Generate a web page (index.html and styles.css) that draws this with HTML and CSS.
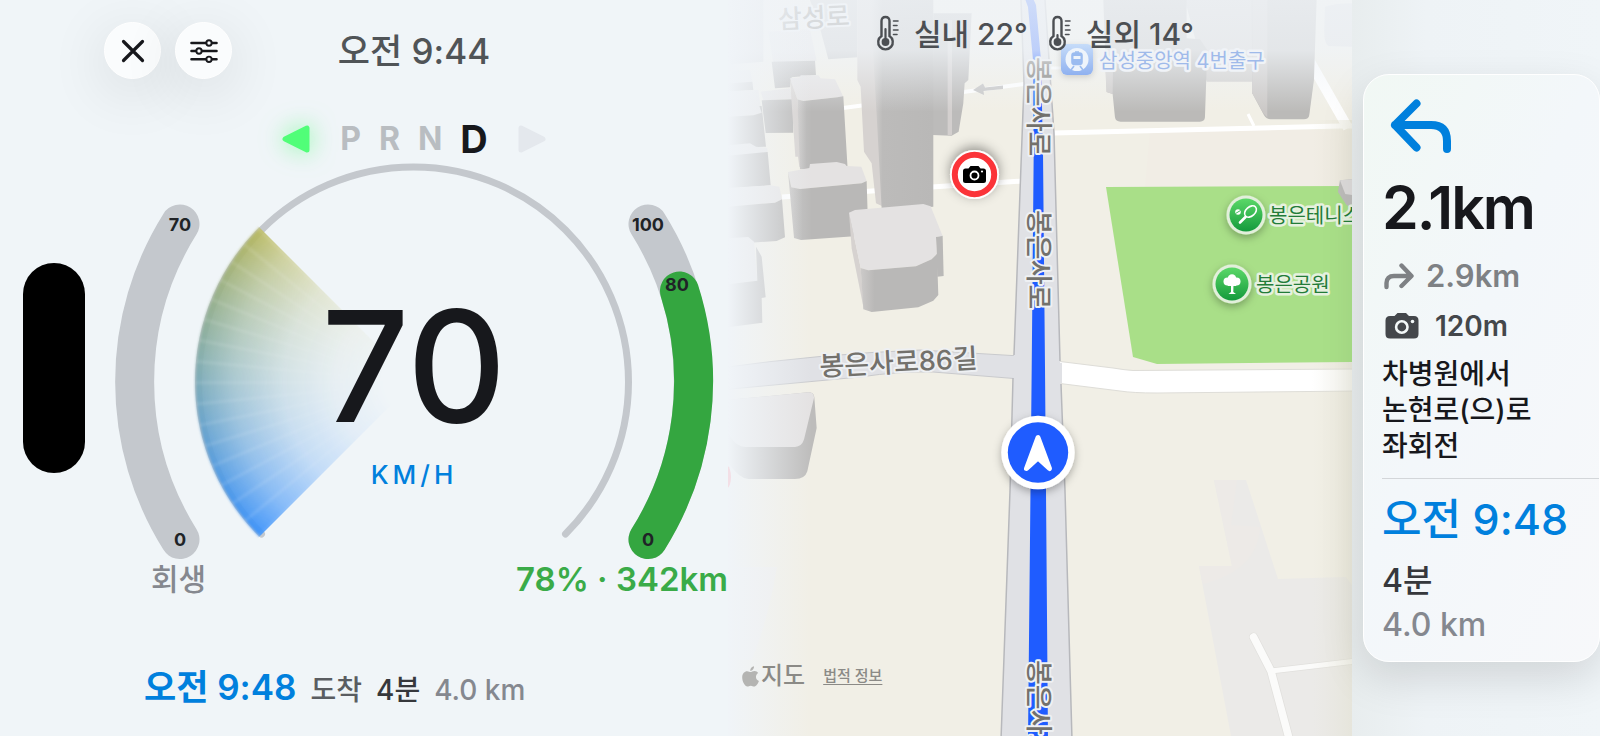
FILE: index.html
```html
<!DOCTYPE html>
<html lang="ko">
<head>
<meta charset="utf-8">
<meta name="viewport" content="width=device-width, initial-scale=1">
<title>주행 계기판</title>
<link rel="stylesheet" href="styles.css">
</head>
<body>
<div class="dash">
  <section class="cluster" aria-label="계기판">
    <div class="sensor"></div>
    <div class="cluster-main">
      <header class="top">
        <div class="top-buttons">
          <button class="round" type="button" aria-label="닫기">
            <svg width="28" height="28" viewBox="0 0 28 28"><path d="M4.500 4.500 23.500 23.500M23.500 4.500 4.500 23.500" fill="none" stroke="#17181c" stroke-width="3.200" stroke-linecap="round"/></svg>
          </button>
          <button class="round" type="button" aria-label="설정">
            <svg width="28" height="28" viewBox="0 0 28 28" fill="none" stroke="#17181c" stroke-width="2.600" stroke-linecap="round"><path d="M1.500 6H16M22 6h4.500M1.500 14H6M12 14h14.500M1.500 22.300H16M22 22.300h4.500"/><circle cx="19" cy="6" r="2.700" stroke-width="1.900"/><circle cx="9" cy="14" r="2.700" stroke-width="1.900"/><circle cx="19" cy="22.300" r="2.700" stroke-width="1.900"/></svg>
          </button>
        </div>
        <time class="clock">오전 9:44</time>
      </header>

      <div class="gears">
        <svg class="turn turn-on" width="28" height="28" viewBox="0 0 28 28"><path d="M3 14 25 3V25Z" fill="#51fe78" stroke="#51fe78" stroke-width="5" stroke-linejoin="round"/></svg>
        <div class="gear-list"><span>P</span><span>R</span><span>N</span><span class="gear-on">D</span></div>
        <svg class="turn" width="28" height="28" viewBox="0 0 28 28"><path d="M25 14 3 3V25Z" fill="#e4e8ed" stroke="#e4e8ed" stroke-width="5" stroke-linejoin="round"/></svg>
      </div>

      <div class="gauge">
        <svg class="gauge-art" viewBox="100 158 628 400">
          <path d="M180 223A297 297 0 0 0 180 538.500" fill="none" stroke="#c4c8cd" stroke-width="39" stroke-linecap="round"/>
          <path d="M648 223A297 297 0 0 1 648 538.500" fill="none" stroke="#c4c8cd" stroke-width="39" stroke-linecap="round"/>
          <path d="M679.500 290A297 297 0 0 1 648 538.500" fill="none" stroke="#34a640" stroke-width="39" stroke-linecap="round"/>
          <path d="M261.500 533A215 215 0 1 1 565.500 533" fill="none" stroke="#c4c8cd" stroke-width="7" stroke-linecap="round"/>
          <foreignObject x="193" y="160" width="442" height="442"><div class="fan"><div class="fan-rays"></div></div></foreignObject>
          <g class="tick" text-anchor="middle">
            <text x="180" y="230">70</text><text x="180" y="545">0</text>
            <text x="648" y="230">100</text><text x="677" y="290">80</text><text x="648" y="545">0</text>
          </g>
        </svg>
        <div class="readout">
          <span class="speed">70</span>
          <span class="unit">KM/H</span>
        </div>
      </div>

      <div class="levels"><span class="regen">회생</span><span class="range">78% · 342km</span></div>

      <footer class="trip">
        <span class="trip-eta">오전 9:48</span><span class="trip-word">도착</span><span class="trip-min">4분</span><span class="trip-dist">4.0 km</span>
      </footer>
    </div>
  </section>

  <section class="map" aria-label="지도">
    <svg class="map-art" viewBox="728 0 624 736" preserveAspectRatio="xMidYMid slice">
      <defs>
        <linearGradient id="fadeLeft"><stop offset="0" stop-color="#f0f4f8"/><stop offset=".3" stop-color="#f0f4f8" stop-opacity=".7"/><stop offset="1" stop-color="#f0f4f8" stop-opacity="0"/></linearGradient>
        <linearGradient id="fadeTop" x2="0" y2="1"><stop offset="0" stop-color="#f0f4f8" stop-opacity=".84"/><stop offset=".45" stop-color="#f0f4f8" stop-opacity=".76"/><stop offset="1" stop-color="#f0f4f8" stop-opacity="0"/></linearGradient>
        <linearGradient id="fadeRight"><stop offset="0" stop-color="#e6e4d6" stop-opacity="0"/><stop offset="1" stop-color="#e0dfcc" stop-opacity=".45"/></linearGradient>
        <linearGradient id="tower"><stop offset="0" stop-color="#d8d5d3"/><stop offset=".2" stop-color="#bcbbba"/><stop offset="1" stop-color="#b9b8b7"/></linearGradient>
        <linearGradient id="wall"><stop offset="0" stop-color="#cccac9"/><stop offset=".18" stop-color="#b9b8b7"/><stop offset="1" stop-color="#b9b8b7"/></linearGradient>
        <linearGradient id="poi" x2="0" y2="1"><stop offset="0" stop-color="#5bd868"/><stop offset="1" stop-color="#149a3c"/></linearGradient>
        <linearGradient id="metro" x2="0" y2="1"><stop offset="0" stop-color="#c6dcf9"/><stop offset="1" stop-color="#8fb1f0"/></linearGradient>
        <filter id="soft" x="-40%" y="-40%" width="180%" height="180%"><feDropShadow dx="0" dy="3" stdDeviation="4" flood-color="#000" flood-opacity=".3"/></filter>
        <filter id="faint" x="-40%" y="-40%" width="180%" height="180%"><feDropShadow dx="0" dy="2" stdDeviation="3" flood-color="#000" flood-opacity=".15"/></filter>
        <filter id="deep" x="-40%" y="-40%" width="180%" height="180%"><feDropShadow dx="0" dy="-3" stdDeviation="6" flood-color="#000" flood-opacity=".4"/></filter>
      </defs>
      <rect x="500" y="-300" width="1100" height="1400" fill="#f1efe6"/>
      <path d="M1150 130H1352V360H1130Z" fill="#f1ede5"/>

      <path d="M1214 480H1246L1278 579 1346 577 1352 585V736H1231L1199 566H1232Z" fill="#ebeae8"/>
      <path d="M1214 480H1237L1231 525 1260 527Q1258 570 1203 584L1199 566H1232Z" fill="#edeae7"/>
      <path d="M735 567H777Q768 620 752 660H738Z" fill="#efeeec"/>
      <g fill="none" stroke="#e1e0dd" stroke-linecap="round"><path d="M1253.500 637 1271 671 1290 742" stroke-width="9"/><path d="M1271 671 1356 661" stroke-width="6.500"/></g>
      <g fill="none" stroke="#fbfbfa" stroke-linecap="round"><path d="M1253.500 637 1271 671 1290 742" stroke-width="7.500"/><path d="M1271 671 1356 661" stroke-width="5"/></g>

      <g fill="none" stroke="#fff">
        <path d="M782 197 1022 181" stroke-width="5"/><path d="M843 108 1024 84" stroke-width="4"/>
        <path d="M1054 133 1340 126H1360" stroke-width="5"/><path d="M1308 58 1348 128" stroke-width="10"/>
        <path d="M1248 114 1254 126" stroke-width="3"/><path d="M1051 68 1080 68" stroke-width="3"/>
      </g>
      <path d="M1003 85.500 985 87.500 983 83.500 973 90 984 95 983.500 91 1003 89Z" fill="#c5c5c5"/>
      <path d="M720 368Q820 354 920 350L1020 356V379L933 372Q900 371 860 377L720 390Z" fill="#e0e1e5" stroke="#c9cacd"/>
      <path d="M1056 361 1113 368Q1125 370 1133 370.500L1360 369V391L1157 393Q1133 393 1120 391L1056 383Z" fill="#fff" stroke="#deddd8"/>
      <path d="M1021 0 1024 84 1014 355 1010 491 1001 740H1072L1065 491 1060 360 1054 133 1045 0Z" fill="#e0e1e5"/>
      <path d="M1021 0 1024 84 1014 355M1013 378 1010 491 1001 740M1072 740 1065 491 1061 384M1060 361 1054 133 1045 0" fill="none" stroke="#b7b8bc" stroke-width="1.500"/>
      <path d="M1013 356V377M1060.500 363V383" stroke="#e0e1e5" stroke-width="3"/>
      <path d="M1024 -4 1028 7 1033 60 1033.700 153 1031.700 368 1028 740H1048L1045 368 1043 153 1041 60 1036 5 1032 -4Z" fill="#1f5cff"/>
      <rect x="1312" y="120" width="40" height="616" fill="url(#fadeRight)"/>
      <path d="M1106 187 1352 186V362L1157 364 1133 357Z" fill="#a9df88"/>

      <g transform="translate(720 0) scale(.3333)" stroke-linejoin="round">
        <path d="M145 95 270 88 290 182 160 188Z" fill="#e4e2e2"/><path d="M155 185 285 182 288 225 215 232 210 262 165 265Z" fill="#b9b8b7"/>
        <path d="M0 0H130V185L0 195Z" fill="#cfcfcf"/><path d="M270 0H412V172L325 178 300 85Z" fill="#c6c6c6"/>
        <path d="M0 215 90 210 97 245 0 255Z" fill="#e6e5e5"/><path d="M0 252 97 245 100 270 0 276Z" fill="#bab9b8"/>
        <path d="M122 275 210 265 218 298 130 301Z" fill="#e4e2e2"/><path d="M125 301 218 298 220 398 137 399Z" fill="#b9b8b7"/>
        <path d="M0 276 115 270 125 340 100 346 0 352Z" fill="#e6e5e5"/><path d="M0 352 100 346 125 338 118 318 125 318 138 440 0 446Z" fill="#b9b8b7"/>
        <path d="M0 438 90 430 108 440 142 444 143 458 0 470Z" fill="#e6e5e5"/><path d="M0 470 143 456 152 556 0 566Z" fill="#b9b8b7"/>
        <path d="M0 567 150 556 178 560 186 598 165 608 0 622Z" fill="#e6e5e5"/><path d="M0 622 165 608 186 598 195 712 170 723 0 735Z" fill="#b9b8b7"/>
        <path d="M0 716 85 711 102 725 112 842 0 856Z" fill="#e6e5e5"/><path d="M0 856 112 842 108 740 125 770 137 892 125 894 127 968 0 985Z" fill="#b9b8b7"/>
        <path d="M640 40 755 40 752 100 745 240 734 250 730 310 716 395 695 407 638 405Z" fill="#bcbbba"/><path d="M683 60H696V405H683Z" fill="#d3cfce"/>
        <path d="M412 0H470L500 625 468 610 455 490 432 455 422 260 412 240Z" fill="#d6d2d0"/>
        <path d="M450 0H640V620L485 628 470 345Z" fill="url(#tower)"/>
        <path d="M210 235 240 232 242 226 295 226 302 235 345 238 370 290 352 292 250 303 232 298Z" fill="#e4e2e2"/>
        <path d="M210 235 232 298 245 505 238 500 234 470 226 470Z" fill="#d6d2d0"/><path d="M232 298 250 303 352 292 370 289 383 508 240 508Z" fill="url(#wall)"/>
        <path d="M204 516 268 504 270 492 350 486 375 492 380 498 424 500 440 543 425 550 240 567 214 562Z" fill="#e4e2e2"/>
        <path d="M204 516 214 562 240 567 425 550 440 543 445 706 243 720 222 714Z" fill="url(#wall)"/>
        <path d="M648 710 668 707 671 828 652 830Z" fill="#b9b8b7"/>
        <path d="M387 636 422 803 432 930 395 745Z" fill="#d6d2d0"/>
        <path d="M387 638 405 630 610 612 632 619 668 708 648 710 650 762 635 778 588 799 445 811 422 804Z" fill="#e4e2e2"/>
        <path d="M422 804 445 811 588 799 635 778 651 762 655 885 640 902 595 922 455 936 430 928Z" fill="url(#wall)"/>
        <g transform="translate(0 1104)"><path d="M0 98 265 73Q282 73 283 88L290 180 262 310Q255 333 225 333H85Q60 333 30 292L0 260Z" fill="#bdbcbb"/><path d="M0 98 265 73Q283 73 282 90L252 215Q245 237 225 237H75Q50 237 30 205L0 180Z" fill="#e4e2e2"/></g>
        <g transform="translate(840 0)">
          <path d="M555 0H760V245H620Z" fill="#cfcdcb"/>
          <path d="M310 0H560V115L600 118 622 150 615 352Q614 365 600 365H362Q347 365 345 352L338 282 320 276Z" fill="#bbbab8"/>
          <path d="M338 282 320 276 312 150 340 150Z" fill="#cecbc9"/>
          <path d="M755 0H950L942 240 928 345Q926 358 912 358H812Q800 358 792 345L757 280Z" fill="#bbbab8"/><path d="M790 340 757 280V0H802V352Z" fill="#cbc8c6"/>
          <path d="M975 20Q1010 10 1057 10V140L985 138Q972 130 973 90Z" fill="#dcdcdc"/>
          <path d="M1020 541 1057 538V622L1040 616 1014 576Z" fill="#bdbcba"/><path d="M1020 541 1057 538V585L1036 582Z" fill="#dddbda"/>
        </g>
      </g>

      <g class="road">
        <text x="778" y="27" font-size="26" transform="rotate(-3 814 20)">삼성로</text>
        <text transform="translate(1029 57) rotate(90)">봉은사로</text>
        <text transform="translate(1029 210) rotate(90)">봉은사로</text>
        <text transform="translate(1029 660) rotate(90)">봉은사로</text>
        <text transform="translate(820 376) rotate(-3)">봉은사로86길</text>
      </g>
      <rect x="728" width="624" height="112" fill="url(#fadeTop)"/>

      <g filter="url(#faint)"><rect x="1061" y="44" width="32" height="31" rx="6" fill="url(#metro)"/></g>
      <circle cx="1077" cy="59.500" r="11.500" fill="#eef4fb"/>
      <g fill="none" stroke="#9bbcf0" stroke-width="1.600"><rect x="1072" y="53" width="10" height="11.500" rx="2.500" fill="#9bbcf0"/><path d="M1074 66 1071 70M1080 66 1083 70M1075 52H1079"/><path d="M1073.500 57.500H1080.500" stroke="#eef4fb" stroke-width="3"/></g>
      <text class="place place-metro" x="1099" y="68">삼성중앙역 4번출구</text>

      <g filter="url(#soft)"><circle cx="1246" cy="215" r="19.500" fill="#e2efdb"/><circle cx="1232" cy="284" r="19.500" fill="#e2efdb"/></g>
      <circle cx="1246" cy="215" r="16.500" fill="url(#poi)"/><circle cx="1232" cy="284" r="16.500" fill="url(#poi)"/>
      <g stroke="#fff" fill="none"><ellipse cx="1250.500" cy="211.500" rx="6.800" ry="4.600" transform="rotate(-42 1250.500 211.500)" stroke-width="1.600"/><path d="M1245.500 217 1240 222.500" stroke-width="2.600" stroke-linecap="round"/></g>
      <circle cx="1238" cy="212" r="2.800" fill="#fff"/><path d="M1235.500 213.500 1240.500 210.500" stroke="#29b14a" stroke-width=".9"/>
      <g fill="#fff"><circle cx="1232" cy="278.500" r="4.200"/><circle cx="1227.500" cy="281.500" r="4"/><circle cx="1236.500" cy="281.500" r="4"/><path d="M1226 282H1238L1236 286H1228ZM1231 284H1233.500L1233.300 292 1236 294H1228.500L1231 292Z"/></g>
      <text class="place" x="1269" y="223">봉은테니스</text>
      <text class="place" x="1256" y="292">봉은공원</text>

      <circle cx="974.500" cy="174.500" r="24.500" fill="#fff" filter="url(#deep)"/>
      <circle cx="974.500" cy="174.500" r="19.700" fill="#fff" stroke="#fb3439" stroke-width="6"/>
      <path d="M965.500 168.500H968.500L970.500 166H978.500L980.500 168.500H983.500Q986 168.500 986 171V180.500Q986 183 983.500 183H965.500Q963 183 963 180.500V171Q963 168.500 965.500 168.500Z"/>
      <circle cx="974.500" cy="175.500" r="4" stroke="#fff" stroke-width="1.800"/><circle cx="982" cy="171.500" r="1.100" fill="#fff"/>

      <circle cx="1038" cy="452.500" r="36.700" fill="#fff" filter="url(#soft)"/><circle cx="1038" cy="452.500" r="30.200" fill="#1f5cff"/>
      <path d="M1038 437.500 1026.500 468.500 1038 458 1049.500 468.500Z" fill="#fff" stroke="#fff" stroke-width="5" stroke-linejoin="round"/>
      <rect x="728" y="0" width="84" height="736" fill="url(#fadeLeft)"/>
      <ellipse cx="727" cy="477" rx="4" ry="11" fill="#f3dfe6"/>
    </svg>
    <div class="map-overlay">
      <div class="weather">
        <span class="temp"><svg width="24" height="38" viewBox="0 0 24 38" fill="none" stroke="#4c4f53" stroke-linecap="round"><path d="M5.500 21V6Q5.500 2 9.500 2T13.500 6V21A7.300 7.300 0 1 1 5.500 21Z" stroke-width="2.400"/><path d="M9.500 14V27" stroke-width="2.200"/><circle cx="9.500" cy="27" r="3.900" fill="#4c4f53" stroke="none"/><path d="M17.500 6H22M17.500 10.500H21M17.500 15H22M17.500 19.500H21" stroke-width="1.600"/></svg>실내 22°</span>
        <span class="temp"><svg width="24" height="38" viewBox="0 0 24 38" fill="none" stroke="#4c4f53" stroke-linecap="round"><path d="M5.500 21V6Q5.500 2 9.500 2T13.500 6V21A7.300 7.300 0 1 1 5.500 21Z" stroke-width="2.400"/><path d="M9.500 20V27" stroke-width="2.200"/><circle cx="9.500" cy="27" r="3.900" fill="#4c4f53" stroke="none"/><path d="M17.500 6H22M17.500 10.500H21M17.500 15H22M17.500 19.500H21" stroke-width="1.600"/></svg>실외 14°</span>
      </div>
      <div class="credit">
        <span class="brand"><svg width="17" height="21" viewBox="0 0 17 21" fill="#b4b4b2"><path d="M12 .300C12.200 2.800 10.400 4.900 8.300 4.900 8 2.700 10 .500 12 .300ZM8.600 6.100C9.300 6.100 10.700 5 12.500 5 14.200 5 15.500 5.900 16.200 6.900 12.900 8.900 13.400 13.500 16.900 14.900 16 17.500 14.100 20.500 12.100 20.500 10.800 20.500 10.400 19.700 8.800 19.700 7.100 19.700 6.600 20.500 5.400 20.500 3 20.500 .200 15.800 .200 11.500.200 7.300 2.700 5.200 5.100 5.200 6.600 5.200 7.900 6.100 8.600 6.100Z"/></svg>지도</span>
        <a class="legal" href="#legal">법적 정보</a>
      </div>
    </div>
  </section>

  <aside class="side" aria-label="경로 안내">
    <div class="card">
      <svg class="turn-left" width="64" height="56" viewBox="0 0 64 56" fill="none" stroke="#0080dd" stroke-width="8" stroke-linecap="round" stroke-linejoin="round"><path d="M28.500 5.500 7 27 28.500 49.500M7 27H43Q59 27 59 43V51"/></svg>
      <strong class="next">2.1km</strong>
      <div class="row row-then"><svg width="32" height="28" viewBox="0 0 32 28" fill="none" stroke="#7e8184" stroke-width="4.400" stroke-linecap="round" stroke-linejoin="round"><path d="M19.500 3.500 29.500 14 19.500 24M29 14H12Q4.500 14 4.500 21V25"/></svg>2.9km</div>
      <div class="row row-cam"><svg width="34" height="28" viewBox="0 0 34 28"><path d="M5 4H9.500L12.500 1H21L24 4H29Q33.500 4 33.500 8.500V22Q33.500 26.500 29 26.500H5Q.500 26.500.500 22V8.500Q.500 4 5 4Z" fill="#44474b"/><circle cx="16.800" cy="15" r="5.700" fill="none" stroke="#f3f8f8" stroke-width="2.600"/><circle cx="27.500" cy="9.500" r="1.800" fill="#f3f8f8"/></svg>120m</div>
      <p class="guide">차병원에서<br>논현로(으)로<br>좌회전</p>
      <div class="arrive">
        <span class="arrive-time">오전 9:48</span>
        <span class="arrive-min">4분</span>
        <span class="arrive-dist">4.0 km</span>
      </div>
    </div>
  </aside>
</div>
</body>
</html>
```

FILE: styles.css
```css
* { box-sizing: border-box; }
body {
  margin: 0;
  background: #f0f5f8;
  color: #17181c;
  font-family: Inter, "Noto Sans CJK KR", sans-serif;
  font-weight: 500;
}
.dash {
  display: grid;
  grid-template-columns: 728fr 624fr 248fr;
  min-height: 100vh;
  overflow: hidden;
}

/* Instrument cluster */
.cluster { display: flex; align-items: stretch; z-index: 1; min-width: 0; }
.sensor {
  flex: none;
  align-self: center;
  width: 62px;
  height: 210px;
  margin: 0 15px 0 23px;
  border-radius: 31px;
  background: #000;
}
.cluster-main { flex: 1; min-width: 0; display: flex; flex-direction: column; padding: 22px 0 22px; }
.top { display: grid; grid-template-columns: 1fr auto 1fr; align-items: center; }
.top-buttons { display: flex; gap: 14px; padding-left: 4px; }
.round {
  display: grid;
  place-items: center;
  width: 57px;
  height: 57px;
  padding: 0;
  border: 1px solid #fff;
  border-radius: 50%;
  background: #fafcfd;
  box-shadow: 0 12px 60px rgba(0, 0, 0, .12);
}
.clock { color: #505457; font-size: 35px; line-height: 48px; }
.gears { display: flex; justify-content: center; align-items: center; gap: 30px; height: 40px; margin-top: 40px; }
.turn { overflow: visible; }
.turn-on { filter: drop-shadow(0 0 12px rgba(81, 254, 120, .7)); }
.gear-list { display: flex; align-items: center; gap: 18px; color: #b9bdc1; font-size: 32px; font-weight: 700; line-height: 40px; }
.gear-on { color: #17181c; font-size: 38px; }
.gauge { display: grid; }
.gauge > * { grid-area: 1 / 1; }
.gauge-art { display: block; width: 100%; height: auto; }
.fan {
  width: 442px;
  height: 442px;
  clip-path: polygon(-3% -3%, 50% 50%, -3% 103%);
  filter: blur(1px);
}
.fan-rays {
  width: 442px;
  height: 442px;
  border-radius: 50%;
  background:
    repeating-conic-gradient(from 225deg, rgba(255, 255, 255, .12) 0deg, transparent .8deg 4.8deg, rgba(255, 255, 255, .12) 5.6deg),
    conic-gradient(from 225deg, #3f94fa 0deg, #4f9ae8 16deg, #6ea6c8 36deg, #84aeb0 50deg, #98b18c 68deg, #b2b768 86deg, #bcbc66 90deg, transparent 93deg, transparent 357deg, #3f94fa 358deg);
  -webkit-mask-image: radial-gradient(circle, transparent 30px, rgba(0, 0, 0, .08) 80px, rgba(0, 0, 0, .26) 130px, rgba(0, 0, 0, .6) 180px, rgba(0, 0, 0, .9) 210px, #000 217px, transparent 220px);
  mask-image: radial-gradient(circle, transparent 30px, rgba(0, 0, 0, .08) 80px, rgba(0, 0, 0, .26) 130px, rgba(0, 0, 0, .6) 180px, rgba(0, 0, 0, .9) 210px, #000 217px, transparent 220px);
}
.tick { fill: #202327; font-size: 18px; font-weight: 700; }
.readout { display: flex; flex-direction: column; align-items: center; padding-top: 130px; }
.speed { font-size: 154px; line-height: 154px; font-weight: 500; }
.unit { margin-top: 16px; color: #0080dd; font-size: 26px; line-height: 32px; letter-spacing: 4px; }
.levels { display: flex; justify-content: space-between; align-items: center; height: 40px; padding-left: 51px; line-height: 40px; }
.regen { color: #85888f; font-size: 30px; }
.range { color: #3aab48; font-size: 33px; font-weight: 600; white-space: nowrap; }
.trip { display: flex; align-items: baseline; gap: 14px; margin-top: auto; padding-left: 44px; line-height: 48px; font-size: 28px; white-space: nowrap; }
.trip-eta { color: #0080dd; font-size: 35px; font-weight: 600; }
.trip-word { color: #5a5d61; }
.trip-min { color: #36383c; }
.trip-dist { color: #85888f; }

/* Map */
.map { display: grid; min-width: 0; overflow: hidden; }
.map > * { grid-area: 1 / 1; }
.map-art { display: block; width: 100%; height: 100%; min-height: 736px; }
.road { fill: #73716c; stroke: #eef0f3; stroke-width: 4px; stroke-linejoin: round; paint-order: stroke; font-size: 27px; font-weight: 500; }
.place { fill: #237c38; stroke: #e6f1df; stroke-width: 5px; stroke-linejoin: round; paint-order: stroke; font-size: 20px; font-weight: 400; }
.place-metro { fill: #9fbaea; stroke: #f0f3f7; }
.map-overlay { z-index: 1; display: flex; flex-direction: column; justify-content: space-between; padding: 14px 14px 40px; }
.weather { display: flex; justify-content: center; gap: 20px; padding-right: 10px; color: #4c4f53; font-size: 30px; line-height: 40px; white-space: nowrap; }
.temp { display: flex; align-items: center; gap: 14px; }
.credit { display: flex; align-items: center; gap: 18px; color: #8b8a86; font-size: 24px; line-height: 40px; }
.brand { display: flex; align-items: center; gap: 2px; }
.legal { color: inherit; font-size: 15px; text-underline-offset: 3px; }

/* Route card */
.side {
  display: flex;
  align-items: center;
  padding-left: 11px;
  background: linear-gradient(90deg, #e8edee, #eef3f6 30%, #f0f5f8);
}
.card {
  flex: 1;
  min-width: 0;
  display: flex;
  flex-direction: column;
  padding: 23px 0 14px 18px;
  border: 1px solid #fff;
  border-radius: 26px;
  background: linear-gradient(115deg, #f1f8f4, #f3f7fa 45%, #f7f8fa);
  box-shadow: 0 16px 44px rgba(0, 0, 0, .13);
}
.turn-left { margin-left: 6px; }
.next { margin-top: 20px; font-size: 59px; line-height: 68px; font-weight: 600; letter-spacing: -2px; }
.row { display: flex; align-items: center; font-weight: 600; }
.row-then { gap: 12px; margin-top: 12px; color: #7e8184; font-size: 31px; line-height: 44px; }
.row-cam { gap: 16px; margin-top: 4px; color: #44474b; font-size: 28px; line-height: 48px; padding-left: 3px; }
.guide { margin: 6px 0 0; font-size: 28px; line-height: 36px; font-weight: 500; }
.arrive { display: flex; flex-direction: column; margin-top: 14px; padding-top: 12px; border-top: 1px solid #d3d6d9; line-height: 44px; font-size: 32px; white-space: nowrap; }
.arrive-time { color: #0080dd; font-size: 43px; line-height: 56px; margin-bottom: 12px; }
.arrive-min { color: #36383c; }
.arrive-dist { color: #85888f; }
```
